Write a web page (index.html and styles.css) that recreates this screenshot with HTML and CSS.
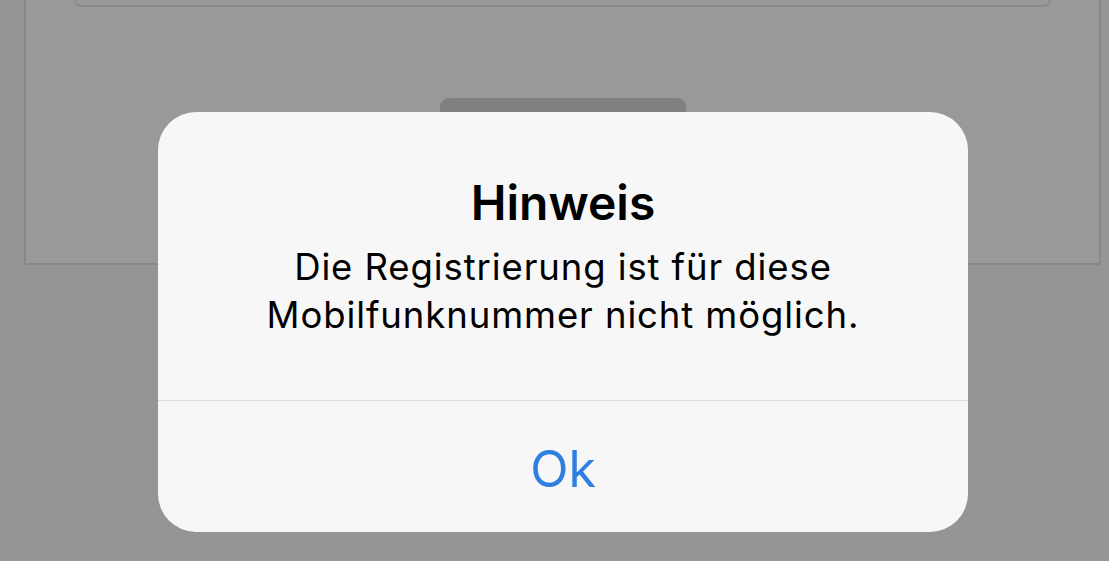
FILE: index.html
```html
<!DOCTYPE html>
<html lang="de">
<head>
<meta charset="utf-8">
<title>Hinweis</title>
<link rel="stylesheet" href="styles.css">
</head>
<body>
  <div class="page">
    <div class="panel">
      <div class="field"></div>
      <div class="submit"></div>
    </div>
  </div>
  <div class="alert" role="alertdialog">
    <div class="alert-body">
      <div class="alert-title">Hinweis</div>
      <div class="alert-message">Die Registrierung ist für diese<br>Mobilfunknummer nicht möglich.</div>
    </div>
    <div class="alert-actions">
      <button class="alert-button">Ok</button>
    </div>
  </div>
</body>
</html>
```
FILE: styles.css
```css
html, body {
  margin: 0;
  padding: 0;
  width: 1109px;
  height: 561px;
  overflow: hidden;
  background: #959595;
  font-family: Inter, "Noto Sans", sans-serif;
}

.page {
  display: flex;
  justify-content: flex-start;
  padding-left: 24px;
}

.panel {
  width: 1073px;
  height: 263px;
  background: #999999;
  border: 2px solid #878787;
  border-top: none;
  border-radius: 0 0 3px 3px;
  display: flex;
  flex-direction: column;
  align-items: center;
}

.field {
  width: 973px;
  height: 5px;
  border: 2px solid #8a8a8a;
  border-top: none;
  border-radius: 0 0 10px 10px;
}

.submit {
  margin-top: 91px;
  width: 246px;
  height: 60px;
  background: #7f8181;
  border-radius: 9px;
}

.alert {
  position: absolute;
  left: 158px;
  top: 112px;
  width: 810px;
  height: 420px;
  background: #f7f7f7;
  border-radius: 38px;
  display: flex;
  flex-direction: column;
  overflow: hidden;
}

.alert-body {
  padding: 62px 20px 61px;
  display: flex;
  flex-direction: column;
  align-items: center;
  gap: 11px;
  text-align: center;
  color: #000;
}

.alert-title {
  font-size: 48px;
  line-height: 58px;
  font-weight: 600;
}

.alert-message {
  font-size: 36.5px;
  line-height: 48px;
  font-weight: 400;
  letter-spacing: 0.9px;
}

.alert-actions {
  flex: 1;
  border-top: 1px solid #dcdcdc;
  display: flex;
  align-items: center;
  justify-content: center;
  padding-top: 4px;
}

.alert-button {
  border: none;
  background: none;
  padding: 0;
  font-family: inherit;
  font-size: 50px;
  line-height: 60px;
  color: #2f7fe0;
}
```
